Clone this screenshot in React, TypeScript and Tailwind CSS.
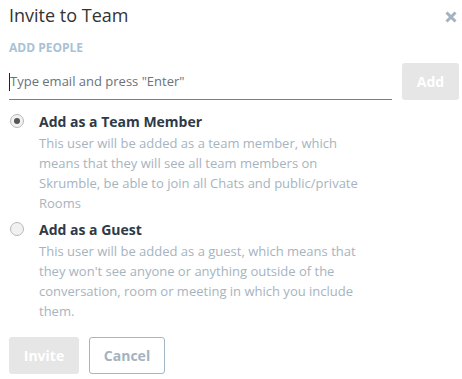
import React from "react";

export default function App() {
  return (
    <div className="w-[462px] h-[379px] bg-white font-['Open_Sans',sans-serif] overflow-hidden">
      <div className="flex items-start justify-between pl-[9px] pr-[5px] pt-[1px]">
        <h1 className="text-[18px] leading-[28px] text-[#333333]">Invite to Team</h1>
        <svg width="12" height="12" viewBox="0 0 12 12" className="mt-[10px]">
          <path d="M1.5 1.5 L10.5 10.5 M10.5 1.5 L1.5 10.5" stroke="#a3b3c1" strokeWidth="3" />
        </svg>
      </div>
      <div className="pl-[9px] pt-[11px] text-[12px] font-bold leading-[16px] text-[#a9c2d6]">ADD PEOPLE</div>
      <div className="flex items-start pl-[9px] pr-[3px] pt-[7px]">
        <div className="w-[383px] h-[37px] border-b-[1.5px] border-[#00a9e0] flex items-center">
          <span className="w-px h-[18px] bg-[#222] mt-[1px]"></span>
          <span className="text-[13px] text-[#6b7279] mt-[1px]">Type email and press "Enter"</span>
        </div>
        <div className="ml-auto w-[57px] h-[37px] rounded-[3px] bg-[#e6e6e6] flex items-center justify-center text-white font-bold text-[14px]">Add</div>
      </div>
      <div className="pl-[10px] pt-[13px] flex gap-[15px]">
        <div className="w-[14px] h-[14px] rounded-full border border-[#b9b9b9] bg-[#f1f1f1] flex items-center justify-center mt-[1px]">
          <div className="w-[6px] h-[6px] rounded-full bg-[#555]"></div>
        </div>
        <div>
          <div className="text-[14px] font-bold leading-[18px] text-[#2e3a46]">Add as a Team Member</div>
          <div className="text-[13px] leading-[20px] text-[#a6b4c0] w-[330px] mt-[2px]">
            This user will be added as a team member, which means that they will see all team members on Skrumble, be able to join all Chats and public/private Rooms
          </div>
        </div>
      </div>
      <div className="pl-[10px] pt-[8px] flex gap-[15px]">
        <div className="w-[14px] h-[14px] rounded-full border border-[#b9b9b9] bg-[#f1f1f1] mt-[1px]"></div>
        <div>
          <div className="text-[14px] font-bold leading-[18px] text-[#2e3a46]">Add as a Guest</div>
          <div className="text-[13px] leading-[20px] text-[#a6b4c0] w-[330px] mt-[2px]">
            This user will be added as a guest, which means that they won't see anyone or anything outside of the conversation, room or meeting in which you include them.
          </div>
        </div>
      </div>
      <div className="flex gap-[10px] pl-[9px] pt-[16px]">
        <div className="w-[70px] h-[37px] rounded-[3px] bg-[#e6e6e6] flex items-center justify-center text-white font-bold text-[14px]">Invite</div>
        <div className="w-[76px] h-[37px] rounded-[3px] border-[1.5px] border-[#a3b6c6] flex items-center justify-center text-[#a3b3c1] font-bold text-[14px]">Cancel</div>
      </div>
    </div>
  );
}
